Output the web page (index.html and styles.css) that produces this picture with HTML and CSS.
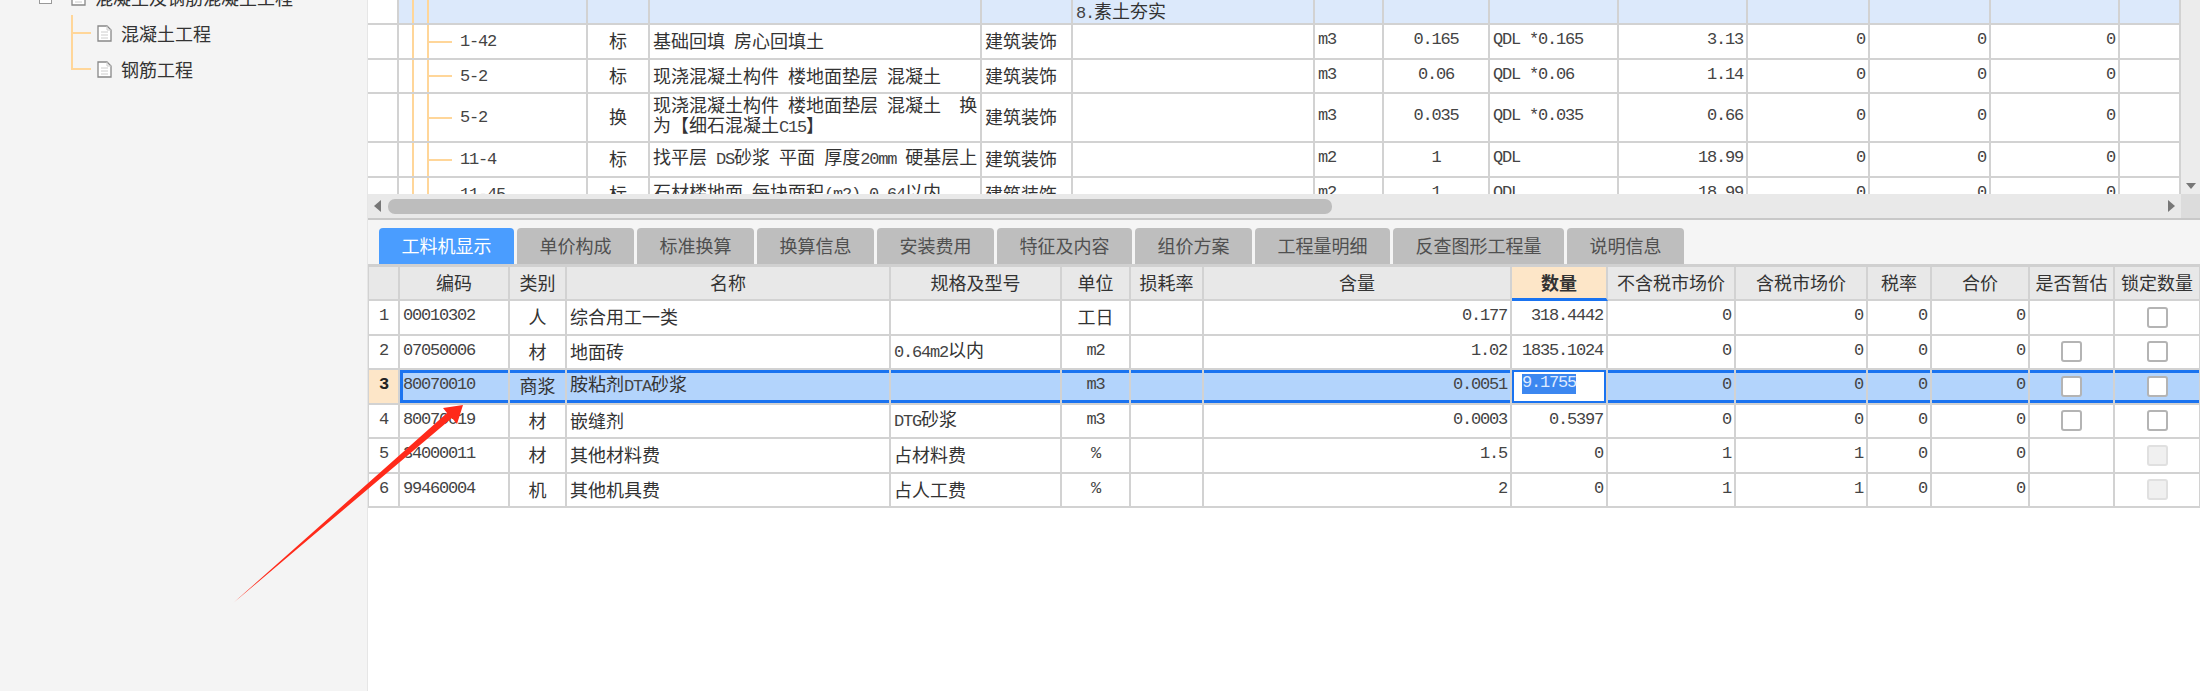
FILE: index.html
```html
<!DOCTYPE html>
<html lang="zh-CN">
<head>
    <meta charset="UTF-8">
    <title>工料机显示</title>
    <link rel="stylesheet" href="styles.css">
</head>
<body>
    <aside class="sidebar">
        <div class="tree-root">
            <span class="minus-box"></span>
            <svg class="doc-icon" viewBox="0 0 15 17"><path d="M1 1h9l4 4v11H1z" fill="#fff" stroke="#888" stroke-width="1.3"/><path d="M10 1v4h4M4 7h7M4 10h7M4 13h7" fill="none" stroke="#ccc"/></svg>
            <span>混凝土及钢筋混凝土工程</span>
        </div>
        <div class="tree-leaf">
            <svg class="doc-icon" viewBox="0 0 15 17"><path d="M1 1h9l4 4v11H1z" fill="#fff" stroke="#888" stroke-width="1.3"/><path d="M10 1v4h4M4 7h7M4 10h7M4 13h7" fill="none" stroke="#ccc"/></svg>
            <span>混凝土工程</span>
        </div>
        <div class="tree-leaf last">
            <svg class="doc-icon" viewBox="0 0 15 17"><path d="M1 1h9l4 4v11H1z" fill="#fff" stroke="#888" stroke-width="1.3"/><path d="M10 1v4h4M4 7h7M4 10h7M4 13h7" fill="none" stroke="#ccc"/></svg>
            <span>钢筋工程</span>
        </div>
    </aside>

    <main class="content">
        <div class="upper">
            <div class="upper-clip">
                <table class="sheet upper-table">
                    <colgroup>
                        <col class="u1"><col class="u2"><col class="u3"><col class="u4"><col class="u5"><col class="u6"><col class="u7">
                        <col class="u8"><col class="u9"><col class="u10"><col class="u11"><col class="u12"><col class="u13"><col class="u14">
                    </colgroup>
                    <tr class="h25 group">
                        <td class="blank"></td><td class="tree-cell-top"></td><td></td><td></td><td></td>
                        <td><span class="lat">8.</span>素土夯实</td>
                        <td></td><td></td><td></td><td></td><td></td><td></td><td></td><td></td>
                    </tr>
                    <tr class="h35">
                        <td></td><td class="tree-cell"><span class="lat">1-42</span></td><td class="c">标</td>
                        <td>基础回填 房心回填土</td><td>建筑装饰</td><td></td>
                        <td class="lat">m3</td><td class="lat c">0.165</td><td class="lat">QDL *0.165</td>
                        <td class="lat r">3.13</td><td class="lat r">0</td><td class="lat r">0</td><td class="lat r">0</td><td></td>
                    </tr>
                    <tr class="h34">
                        <td></td><td class="tree-cell"><span class="lat">5-2</span></td><td class="c">标</td>
                        <td>现浇混凝土构件 楼地面垫层 混凝土</td><td>建筑装饰</td><td></td>
                        <td class="lat">m3</td><td class="lat c">0.06</td><td class="lat">QDL *0.06</td>
                        <td class="lat r">1.14</td><td class="lat r">0</td><td class="lat r">0</td><td class="lat r">0</td><td></td>
                    </tr>
                    <tr class="h49">
                        <td></td><td class="tree-cell"><span class="lat">5-2</span></td><td class="c">换</td>
                        <td class="two-line">现浇混凝土构件 楼地面垫层 混凝土 &nbsp;换<br>为【细石混凝土<span class="lat">C15</span>】</td><td>建筑装饰</td><td></td>
                        <td class="lat">m3</td><td class="lat c">0.035</td><td class="lat">QDL *0.035</td>
                        <td class="lat r">0.66</td><td class="lat r">0</td><td class="lat r">0</td><td class="lat r">0</td><td></td>
                    </tr>
                    <tr class="h35">
                        <td></td><td class="tree-cell"><span class="lat">11-4</span></td><td class="c">标</td>
                        <td>找平层 <span class="lat">DS</span>砂浆 平面 厚度<span class="lat">20mm</span> 硬基层上</td><td>建筑装饰</td><td></td>
                        <td class="lat">m2</td><td class="lat c">1</td><td class="lat">QDL</td>
                        <td class="lat r">18.99</td><td class="lat r">0</td><td class="lat r">0</td><td class="lat r">0</td><td></td>
                    </tr>
                    <tr class="h35">
                        <td></td><td class="tree-cell"><span class="lat">11-45</span></td><td class="c">标</td>
                        <td>石材楼地面 每块面积<span class="lat">(m2) 0.64</span>以内</td><td>建筑装饰</td><td></td>
                        <td class="lat">m2</td><td class="lat c">1</td><td class="lat">QDL</td>
                        <td class="lat r">18.99</td><td class="lat r">0</td><td class="lat r">0</td><td class="lat r">0</td><td></td>
                    </tr>
                </table>
            </div>
            <div class="vscroll"><span class="arrow-down"></span></div>
        </div>

        <div class="hscroll">
            <span class="arrow-left"></span>
            <span class="thumb"></span>
            <span class="arrow-right"></span>
            <span class="corner"></span>
        </div>

        <div class="tabs">
            <div class="tab active">工料机显示</div>
            <div class="tab">单价构成</div>
            <div class="tab">标准换算</div>
            <div class="tab">换算信息</div>
            <div class="tab">安装费用</div>
            <div class="tab">特征及内容</div>
            <div class="tab">组价方案</div>
            <div class="tab">工程量明细</div>
            <div class="tab">反查图形工程量</div>
            <div class="tab">说明信息</div>
        </div>

        <table class="sheet lower-table">
            <colgroup>
                <col class="l1"><col class="l2"><col class="l3"><col class="l4"><col class="l5"><col class="l6"><col class="l7"><col class="l8">
                <col class="l9"><col class="l10"><col class="l11"><col class="l12"><col class="l13"><col class="l14"><col class="l15">
            </colgroup>
            <tr class="head">
                <th></th><th>编码</th><th>类别</th><th>名称</th><th>规格及型号</th><th>单位</th><th>损耗率</th><th>含量</th>
                <th class="qty-head">数量</th><th>不含税市场价</th><th>含税市场价</th><th>税率</th><th>合价</th><th>是否暂估</th><th>锁定数量</th>
            </tr>
            <tr>
                <td class="num">1</td><td class="lat">00010302</td><td class="c">人</td><td>综合用工一类</td><td></td><td class="c">工日</td><td></td>
                <td class="lat r">0.177</td><td class="lat r">318.4442</td><td class="lat r">0</td><td class="lat r">0</td><td class="lat r">0</td><td class="lat r">0</td>
                <td></td><td class="c"><input class="check" type="checkbox"></td>
            </tr>
            <tr>
                <td class="num">2</td><td class="lat">07050006</td><td class="c">材</td><td>地面砖</td><td><span class="lat">0.64m2</span>以内</td><td class="lat c">m2</td><td></td>
                <td class="lat r">1.02</td><td class="lat r">1835.1024</td><td class="lat r">0</td><td class="lat r">0</td><td class="lat r">0</td><td class="lat r">0</td>
                <td class="c"><input class="check" type="checkbox"></td><td class="c"><input class="check" type="checkbox"></td>
            </tr>
            <tr class="selected">
                <td class="num">3</td><td class="lat first">80070010</td><td class="c">商浆</td><td>胺粘剂<span class="lat">DTA</span>砂浆</td><td></td><td class="lat c">m3</td><td></td>
                <td class="lat r">0.0051</td><td class="lat editing"><span class="picked">9.1755</span></td><td class="lat r">0</td><td class="lat r">0</td><td class="lat r">0</td><td class="lat r">0</td>
                <td class="c"><input class="check" type="checkbox"></td><td class="c"><input class="check" type="checkbox"></td>
            </tr>
            <tr>
                <td class="num">4</td><td class="lat">80070019</td><td class="c">材</td><td>嵌缝剂</td><td><span class="lat">DTG</span>砂浆</td><td class="lat c">m3</td><td></td>
                <td class="lat r">0.0003</td><td class="lat r">0.5397</td><td class="lat r">0</td><td class="lat r">0</td><td class="lat r">0</td><td class="lat r">0</td>
                <td class="c"><input class="check" type="checkbox"></td><td class="c"><input class="check" type="checkbox"></td>
            </tr>
            <tr>
                <td class="num">5</td><td class="lat">34000011</td><td class="c">材</td><td>其他材料费</td><td>占材料费</td><td class="lat c">%</td><td></td>
                <td class="lat r">1.5</td><td class="lat r">0</td><td class="lat r">1</td><td class="lat r">1</td><td class="lat r">0</td><td class="lat r">0</td>
                <td></td><td class="c"><input class="check" type="checkbox" disabled></td>
            </tr>
            <tr>
                <td class="num">6</td><td class="lat">99460004</td><td class="c">机</td><td>其他机具费</td><td>占人工费</td><td class="lat c">%</td><td></td>
                <td class="lat r">2</td><td class="lat r">0</td><td class="lat r">1</td><td class="lat r">1</td><td class="lat r">0</td><td class="lat r">0</td>
                <td></td><td class="c"><input class="check" type="checkbox" disabled></td>
            </tr>
        </table>
    </main>

    <!-- 标注箭头 -->
    <svg class="annotation" viewBox="0 0 2200 691">
        <defs>
            <linearGradient id="arrowFade" gradientUnits="userSpaceOnUse" x1="232" y1="604" x2="463" y2="405">
                <stop offset="0" stop-color="#ff2a1a" stop-opacity="0"/>
                <stop offset="0.03" stop-color="#ff2a1a"/>
                <stop offset="1" stop-color="#ff2a1a"/>
            </linearGradient>
        </defs>
        <polygon points="232,604 447,413 443,408 463,405 457,424 452,418" fill="url(#arrowFade)"/>
    </svg>
</body>
</html>
```

FILE: styles.css
```css
* {
    margin: 0;
    padding: 0;
    box-sizing: border-box;
}

body {
    width: 2200px;
    height: 691px;
    overflow: hidden;
    display: flex;
    position: relative;
    background: white;
    color: #333;
    font-family: "Noto Sans CJK SC", "Liberation Sans", sans-serif;
    font-size: 18px;
    line-height: 20px;
}

/* 左侧树 */
.sidebar {
    width: 368px;
    height: 691px;
    flex: none;
    overflow: hidden;
    background: #f4f4f4;
    border-right: 1px solid #e6e6e6;
}

.tree-root {
    height: 36px;
    margin-top: -21px;
    padding-left: 39px;
    display: flex;
    align-items: center;
    white-space: nowrap;
}

.minus-box {
    width: 13px;
    height: 13px;
    margin-right: 19px;
    background: white;
    border: 1px solid #999;
}

.tree-root .doc-icon {
    margin-right: 9px;
}

.doc-icon {
    width: 15px;
    height: 17px;
    flex: none;
}

.tree-leaf {
    height: 36px;
    margin-left: 71px;
    padding-left: 26px;
    display: flex;
    align-items: center;
    gap: 9px;
    background:
        linear-gradient(#ffd699, #ffd699) 0 0 / 2px 100% no-repeat,
        linear-gradient(#ffd699, #ffd699) 0 50% / 20px 2px no-repeat;
}

.tree-leaf.last {
    background:
        linear-gradient(#ffd699, #ffd699) 0 0 / 2px 50% no-repeat,
        linear-gradient(#ffd699, #ffd699) 0 50% / 20px 2px no-repeat;
}

/* 右侧内容 */
.content {
    width: 1832px;
    flex: none;
    background: white;
}

.upper {
    height: 194px;
    display: flex;
}

.upper-clip {
    width: 1813px;
    height: 194px;
    overflow: hidden;
}

.vscroll {
    width: 19px;
    padding-bottom: 5px;
    display: flex;
    align-items: flex-end;
    justify-content: center;
    background: #ececec;
}

.arrow-down {
    border-left: 5px solid transparent;
    border-right: 5px solid transparent;
    border-top: 6px solid #777;
}

.hscroll {
    height: 26px;
    padding-left: 6px;
    display: flex;
    align-items: center;
    background: #e9e9e9;
    border-bottom: 2px solid #c8c8c8;
}

.arrow-left {
    border-top: 6px solid transparent;
    border-bottom: 6px solid transparent;
    border-right: 7px solid #777;
}

.thumb {
    width: 944px;
    height: 15px;
    margin-left: 7px;
    background: #bdbdbd;
    border-radius: 7px;
}

.arrow-right {
    margin-left: auto;
    margin-right: 6px;
    border-top: 6px solid transparent;
    border-bottom: 6px solid transparent;
    border-left: 7px solid #777;
}

.corner {
    width: 19px;
    height: 24px;
    background: #dcdcdc;
}

.tabs {
    height: 47px;
    padding: 8px 0 0 11px;
    display: flex;
    gap: 3px;
    background: #f5f5f5;
    border-bottom: 3px solid #d0d0d0;
}

.tab {
    height: 36px;
    padding: 0 22.5px;
    line-height: 34px;
    background: #bebebe;
    color: #505050;
    border-radius: 4px 4px 0 0;
    white-space: nowrap;
}

.tab.active {
    background: #4a9dff;
    color: white;
}

/* 表格 */
.sheet {
    table-layout: fixed;
    border-collapse: separate;
    border-spacing: 0;
}

.sheet td,
.sheet th {
    padding: 0 3px 2px;
    border-right: 2px solid #d2d2d2;
    border-bottom: 2px solid #d2d2d2;
    white-space: nowrap;
    overflow: hidden;
    word-spacing: 5px;
}

/* 半角字母数字 9px 宽 */
.sheet .lat,
.sheet .num {
    font-family: "Liberation Mono", monospace;
    font-size: 17px;
    letter-spacing: -1.2px;
    word-spacing: 0;
    color: #444;
}

.sheet .c {
    text-align: center;
}

.sheet .r {
    text-align: right;
}

.upper-table {
    width: 1813px;
}

.upper-table td {
    padding-bottom: 3px;
}

.upper-table .group td {
    padding-bottom: 0;
    line-height: 16px;
    background-color: #dce9fb;
}

.upper-table .group td.blank {
    background-color: white;
}

.upper-table .tree-cell-top {
    background-image:
        linear-gradient(#ffd699, #ffd699),
        linear-gradient(#ffd699, #ffd699);
    background-size: 2px 100%, 2px 100%;
    background-position: 13px 0, 28px 0;
    background-repeat: no-repeat;
}

.upper-table .tree-cell {
    padding-left: 61px;
    background-image:
        linear-gradient(#ffd699, #ffd699),
        linear-gradient(#ffd699, #ffd699),
        linear-gradient(#ffd699, #ffd699);
    background-size: 2px 100%, 2px 100%, 25px 2px;
    background-position: 13px 0, 28px 0, 28px 50%;
    background-repeat: no-repeat;
}

.upper-table .two-line {
    line-height: 20px;
}

.h25 { height: 25px; }
.h34 { height: 34px; }
.h35 { height: 35px; }
.h49 { height: 49px; }

.u1 { width: 31px; }
.u2 { width: 189px; }
.u3 { width: 62px; }
.u4 { width: 332px; }
.u5 { width: 91px; }
.u6 { width: 242px; }
.u7 { width: 69px; }
.u8 { width: 106px; }
.u9 { width: 129px; }
.u10 { width: 129px; }
.u11 { width: 122px; }
.u12 { width: 121px; }
.u13 { width: 129px; }
.u14 { width: 61px; }

.lower-table {
    width: 1832px;
    border-left: 1px solid #d2d2d2;
}

.lower-table tr {
    height: 34.5px;
}

.lower-table .head {
    height: 34px;
}

.lower-table th {
    background: #e8e8e8;
    font-weight: 400;
    padding: 0 0 2px;
}

.lower-table .qty-head {
    background: #fde6c8;
    font-weight: 700;
    border-bottom: 3px solid #1a73f0;
}

.lower-table .num {
    text-align: center;
    padding: 0 0 2px;
}

.selected td {
    background: #b3d4fc;
    box-shadow: inset 0 3px #1a73f0, inset 0 -3px #1a73f0;
}

.selected td.num {
    background: #fde6c8;
    font-weight: 700;
    color: #222;
    box-shadow: none;
}

.selected td.first {
    box-shadow: inset 3px 0 #1a73f0, inset 0 3px #1a73f0, inset 0 -3px #1a73f0;
}

.selected td.editing {
    padding: 3px 0 0 10px;
    vertical-align: top;
    background: white;
    box-shadow: inset 0 0 0 2px #1a73f0;
}

.picked {
    display: inline-block;
    height: 20px;
    background: #3c87f0;
    color: #dfeaff;
    line-height: 18px;
}

.check {
    appearance: none;
    display: block;
    width: 21px;
    height: 21px;
    margin: 2px auto 0;
    background: white;
    border: 2px solid #b4b4b4;
    border-radius: 3px;
}

.check:disabled {
    background: #f0f0f0;
    border-color: #e0e0e0;
}

.l1 { width: 31px; }
.l2 { width: 110px; }
.l3 { width: 57px; }
.l4 { width: 324px; }
.l5 { width: 171px; }
.l6 { width: 69px; }
.l7 { width: 73px; }
.l8 { width: 308px; }
.l9 { width: 96px; }
.l10 { width: 128px; }
.l11 { width: 132px; }
.l12 { width: 64px; }
.l13 { width: 98px; }
.l14 { width: 85px; }
.l15 { width: 86px; }

.annotation {
    position: absolute;
    left: 0;
    top: 0;
    width: 2200px;
    height: 691px;
    pointer-events: none;
}
```
